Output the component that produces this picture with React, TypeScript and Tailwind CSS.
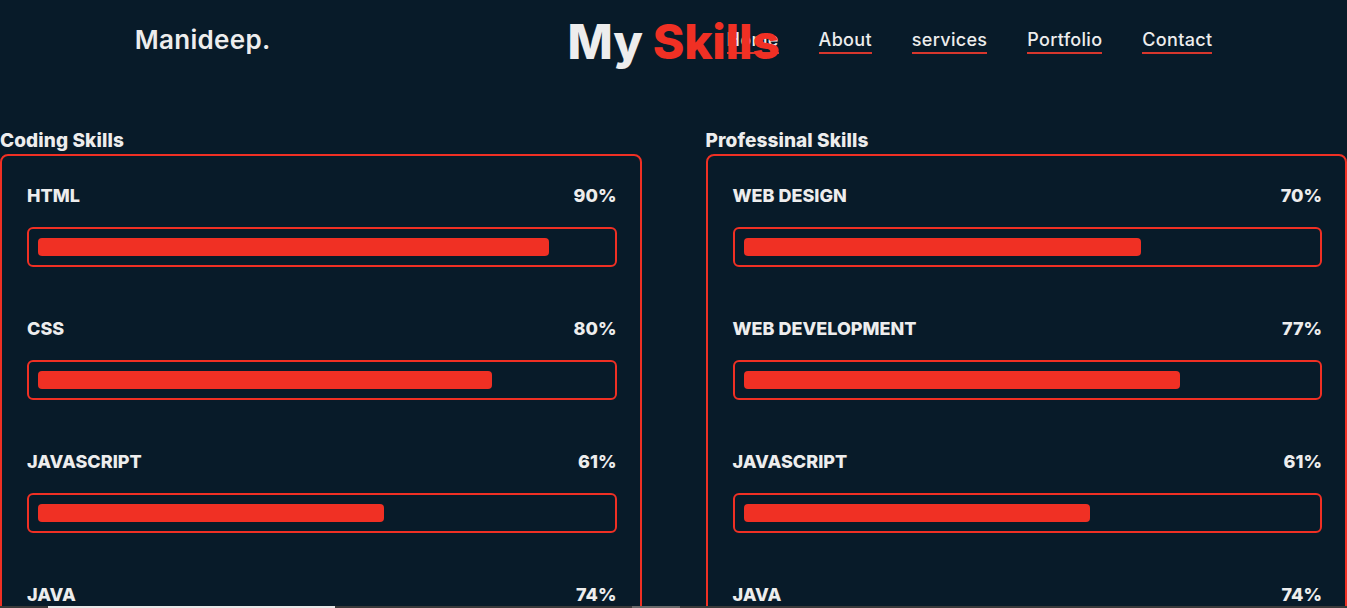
import React from "react";

type Skill = { name: string; pct: number };

const coding: Skill[] = [
  { name: "HTML", pct: 90 },
  { name: "CSS", pct: 80 },
  { name: "JAVASCRIPT", pct: 61 },
  { name: "JAVA", pct: 74 },
];

const professional: Skill[] = [
  { name: "WEB DESIGN", pct: 70 },
  { name: "WEB DEVELOPMENT", pct: 77 },
  { name: "JAVASCRIPT", pct: 61 },
  { name: "JAVA", pct: 74 },
];

function SkillCard({ title, skills }: { title: string; skills: Skill[] }) {
  return (
    <div className="flex flex-col">
      <h3 className="text-[19px] leading-[24px] font-extrabold text-[#ededed] mb-[1px] tracking-[0.1px]">{title}</h3>
      <div className="border-2 border-[#f03024] rounded-[8px] pl-[25px] pr-[23px] pt-[26px] pb-[40px] flex flex-col gap-[48px]">
        {skills.map((s) => (
          <div key={s.name} className="flex flex-col">
            <div className="flex justify-between items-center text-[18px] leading-[27px] font-extrabold text-[#ededed]">
              <span>{s.name}</span>
              <span>{s.pct}%</span>
            </div>
            <div className="mt-[18px] h-[40px] border-2 border-[#f03024] rounded-[6px] p-[9px]">
              <div className="h-full bg-[#f03024] rounded-[4px]" style={{ width: `${s.pct}%` }} />
            </div>
          </div>
        ))}
      </div>
    </div>
  );
}

export default function App() {
  return (
    <div className="min-h-screen bg-[#081b29] text-[#ededed] font-['Inter',sans-serif] relative overflow-hidden">
      <header className="relative h-[78px] px-[10%] flex items-center justify-between">
        <a className="text-[26px] font-semibold text-[#ededed] tracking-[0.3px]">Manideep.</a>
        <nav className="flex items-center gap-[40px]">
          {["Home", "About", "services", "Portfolio", "Contact"].map((l) => (
            <a
              key={l}
              className="text-[18px] font-medium text-[#ededed] border-b-2 border-[#d8372d] leading-[22px] pb-[1px] mt-[4px] tracking-[0.3px]"
            >
              {l}
            </a>
          ))}
        </nav>
        <h2 className="absolute left-1/2 -translate-x-1/2 top-[16px] text-[48px] leading-[52px] font-extrabold whitespace-nowrap tracking-[-0.3px]">
          <span className="text-[#ededed]">My </span>
          <span className="text-[#f03024]">Skills</span>
        </h2>
      </header>
      <main className="pt-[51px] grid grid-cols-2 gap-[64px]">
        <SkillCard title="Coding Skills" skills={coding} />
        <SkillCard title="Professinal Skills" skills={professional} />
      </main>
      <div className="fixed bottom-0 left-0 right-0 h-[2px] bg-[#3a3a3a]">
        <div className="absolute left-[48px] w-[287px] h-full bg-[#e6e6e6]" />
        <div className="absolute left-[632px] w-[48px] h-full bg-[#6a6a6a]" />
      </div>
    </div>
  );
}
